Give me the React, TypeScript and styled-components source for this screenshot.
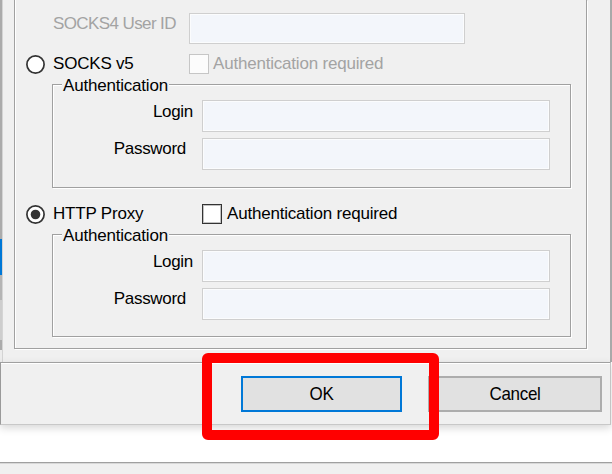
import React from "react";
import styled, { createGlobalStyle } from "styled-components";

const Global = createGlobalStyle`
  html, body { margin: 0; padding: 0; background: #fff; }
  body { font-family: "Liberation Sans", Arial, sans-serif; font-size: 17px; color: #000; }
  * { box-sizing: border-box; }
`;

const Page = styled.div`
  position: relative;
  width: 612px;
  height: 474px;
  overflow: hidden;
  background: #fff;
  display: flex;
  flex-direction: column;
`;

const TopArea = styled.div`
  display: flex;
  height: 362px;
  flex-shrink: 0;
`;

const SideStrip = styled.div`
  width: 3px;
  display: flex;
  flex-direction: column;
  background: #f0f0f0;
`;

const StripSeg = styled.div<{ $h: number; $c: string }>`
  height: ${(p) => p.$h}px;
  background: ${(p) => p.$c};
  border-right: 1px solid #d4d4d4;
`;

const TabPage = styled.div`
  flex: 1;
  background: #f0f0f0;
  border-right: 2px solid #a9a9a9;
  padding: 0 23px 0 11px;
`;

const OuterGroup = styled.div`
  height: 349px;
  border: 1px solid #a0a0a0;
  border-top: none;
  box-shadow: inset 1px 0 0 #fff, 1px 1px 0 #fff;
  padding: 13px 0 0 11px;
  display: flex;
  flex-direction: column;
  gap: 10px;
`;

const FieldRow = styled.div`
  display: flex;
  align-items: flex-start;
  height: 31px;
`;

const FieldLabel = styled.div<{ $disabled?: boolean; $w?: number }>`
  width: ${(p) => (p.$w ? `${p.$w}px` : "auto")};
  padding-left: 27px;
  padding-top: 2px;
  line-height: 18px;
  letter-spacing: -0.6px;
  white-space: nowrap;
  color: ${(p) => (p.$disabled ? "#a3a3a3" : "#000")};
`;

const TextBox = styled.input<{ $w: number; $h: number }>`
  appearance: none;
  display: block;
  width: ${(p) => p.$w}px;
  height: ${(p) => p.$h}px;
  margin: 0;
  padding: 0;
  border: 1px solid #cfcfcf;
  box-shadow: inset 0 0 0 1px #fbfcfd;
  background: #f3f6fb;
  outline: none;
`;

const RadioRow = styled.div<{ $mt?: number }>`
  display: flex;
  align-items: center;
  height: 20px;
  margin-top: ${(p) => p.$mt || 0}px;
`;

const RadioIcon = styled.svg`
  width: 19px;
  height: 19px;
  margin-right: 8px;
  flex-shrink: 0;
`;

const RadioLabel = styled.div<{ $w: number }>`
  width: ${(p) => p.$w}px;
  line-height: 18px;
  letter-spacing: -0.2px;
  white-space: nowrap;
`;

const CheckBox = styled.div<{ $disabled?: boolean }>`
  width: 20px;
  height: 20px;
  flex-shrink: 0;
  background: ${(p) => (p.$disabled ? "#fcfcfc" : "#fff")};
  border: 1px solid ${(p) => (p.$disabled ? "#c6c6c6" : "#333")};
  box-shadow: ${(p) =>
    p.$disabled ? "none" : "inset 0 0 0 1px rgba(51,51,51,0.3)"};
  margin-right: ${(p) => (p.$disabled ? 4 : 5)}px;
`;

const CheckLabel = styled.div<{ $disabled?: boolean }>`
  line-height: 18px;
  letter-spacing: -0.2px;
  white-space: nowrap;
  color: ${(p) => (p.$disabled ? "#a3a3a3" : "#000")};
`;

const Group = styled.div<{ $h: number }>`
  position: relative;
  margin-left: 26px;
  width: 519px;
  height: ${(p) => p.$h}px;
  flex-shrink: 0;
  border: 1px solid #a0a0a0;
  box-shadow: inset 1px 1px 0 #fff, 1px 1px 0 #fff;
  padding: 15px 20px 0 0;
  display: grid;
  grid-template-columns: 149px 348px;
  grid-auto-rows: 32px;
  row-gap: 6px;
  align-items: start;
`;

const GroupTitle = styled.div`
  position: absolute;
  top: -8px;
  left: 9px;
  padding: 0 1px;
  background: #f0f0f0;
  line-height: 18px;
  letter-spacing: -0.2px;
`;

const GridLabel = styled.div<{ $pr: number; $pt: number }>`
  justify-self: end;
  padding-right: ${(p) => p.$pr}px;
  padding-top: ${(p) => p.$pt}px;
  line-height: 18px;
  letter-spacing: -0.3px;
`;

const ButtonPanel = styled.div`
  height: 63px;
  flex-shrink: 0;
  width: 611px;
  background: #f0f0f0;
  border-top: 1px solid #a0a0a0;
  border-left: 1px solid #9a9a9a;
  border-right: 1px solid #c4c4c4;
  border-bottom: 1px solid #c8c8c8;
  box-shadow: inset 0 1px 0 #fff, 0 3px 8px rgba(0, 0, 0, 0.16);
  display: flex;
  align-items: flex-start;
  padding: 13px 0 0 240px;
  gap: 26px;
  position: relative;
  z-index: 1;
`;

const DialogButton = styled.div<{ $w: number; $default?: boolean }>`
  width: ${(p) => p.$w}px;
  height: 36px;
  background: #e1e1e1;
  border: 2px solid ${(p) => (p.$default ? "#0078d7" : "#adadad")};
  display: flex;
  align-items: center;
  justify-content: center;
`;

const ButtonText = styled.span`
  display: inline-block;
  line-height: 18px;
  letter-spacing: -0.3px;
  transform: scaleY(1.12);
`;

const Spacer = styled.div`
  flex: 1;
  background: #fff;
`;

const BottomBar = styled.div`
  height: 12px;
  flex-shrink: 0;
  background: #f0f0f0;
  border-top: 1px solid #a0a0a0;
  box-shadow: inset 0 1px 0 #d8d8d8;
`;

const Highlight = styled.div`
  position: absolute;
  left: 202px;
  top: 353px;
  width: 237px;
  height: 87px;
  border: 10px solid #ff0000;
  border-radius: 6px;
  z-index: 2;
  pointer-events: none;
`;

const Radio: React.FC<{ checked?: boolean }> = ({ checked }) => (
  <RadioIcon viewBox="0 0 19 19">
    <circle cx="9.5" cy="9.5" r="8.6" fill="#fff" stroke="#333" strokeWidth="1.7" />
    {checked && <circle cx="9.5" cy="9.5" r="4.8" fill="#333" />}
  </RadioIcon>
);

const AuthGroup: React.FC<{ h: number }> = ({ h }) => (
  <Group $h={h}>
    <GroupTitle>Authentication</GroupTitle>
    <GridLabel $pr={9} $pt={3}>Login</GridLabel>
    <TextBox $w={348} $h={32} disabled />
    <GridLabel $pr={16} $pt={2}>Password</GridLabel>
    <TextBox $w={348} $h={32} disabled />
  </Group>
);

export default function App() {
  return (
    <Page>
      <Global />
      <TopArea>
        <SideStrip>
          <StripSeg $h={239} $c="#ababab" />
          <StripSeg $h={36} $c="#0078d7" />
          <StripSeg $h={25} $c="#b4b4b4" />
          <StripSeg $h={40} $c="#cdcdcd" />
          <StripSeg $h={10} $c="#ababab" />
          <StripSeg $h={12} $c="#ececec" />
        </SideStrip>
        <TabPage>
          <OuterGroup>
            <FieldRow>
              <FieldLabel $disabled $w={163}>SOCKS4 User ID</FieldLabel>
              <TextBox $w={276} $h={31} disabled />
            </FieldRow>
            <RadioRow>
              <Radio />
              <RadioLabel $w={136}>SOCKS v5</RadioLabel>
              <CheckBox $disabled />
              <CheckLabel $disabled>Authentication required</CheckLabel>
            </RadioRow>
            <AuthGroup h={104} />
            <RadioRow $mt={6}>
              <Radio checked />
              <RadioLabel $w={149}>HTTP Proxy</RadioLabel>
              <CheckBox />
              <CheckLabel>Authentication required</CheckLabel>
            </RadioRow>
            <AuthGroup h={103} />
          </OuterGroup>
        </TabPage>
      </TopArea>
      <ButtonPanel>
        <DialogButton $w={161} $default>
          <ButtonText>OK</ButtonText>
        </DialogButton>
        <DialogButton $w={174}>
          <ButtonText>Cancel</ButtonText>
        </DialogButton>
      </ButtonPanel>
      <Spacer />
      <BottomBar />
      <Highlight />
    </Page>
  );
}
